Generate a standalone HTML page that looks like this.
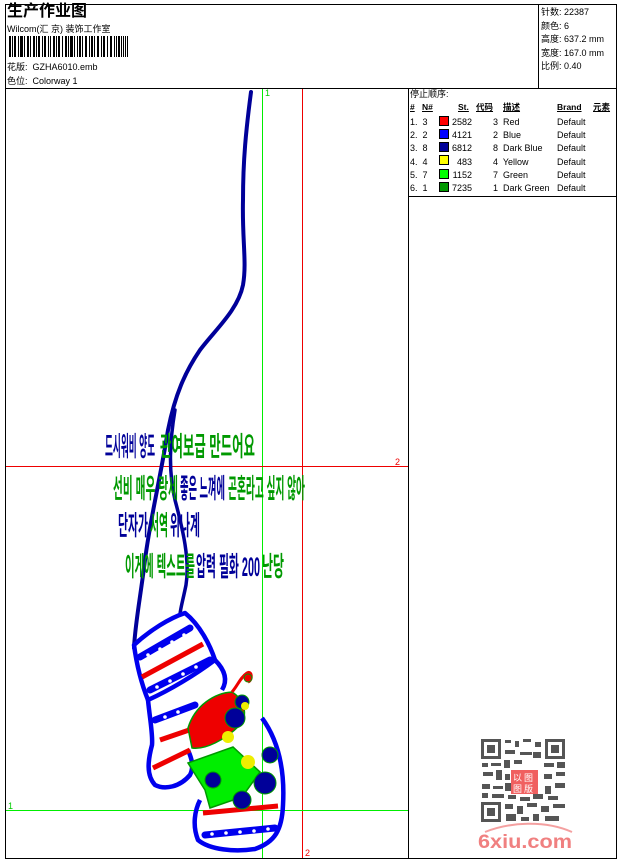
<!DOCTYPE html>
<html><head><meta charset="utf-8"><style>
body{margin:0;width:620px;height:860px;background:#fff;overflow:hidden;font-family:"Liberation Sans","Noto Sans CJK SC",sans-serif;}
.t{position:absolute;font-size:9px;color:#000;white-space:nowrap;line-height:10px}
</style></head><body>
<svg width="620" height="860" style="position:absolute;left:0;top:0" font-family="Liberation Sans, Noto Sans CJK SC, sans-serif">
<rect x="5.5" y="4.5" width="611" height="84" fill="none" stroke="#000"/>
<line x1="538.5" y1="4" x2="538.5" y2="88" stroke="#000"/>
<rect x="5.5" y="88.5" width="611" height="770" fill="none" stroke="#000"/>
<line x1="408.5" y1="88" x2="408.5" y2="858" stroke="#000"/>
<line x1="408" y1="196.5" x2="616" y2="196.5" stroke="#000"/>
<g fill="#000">
<rect x="9" y="36" width="2" height="21"/><rect x="12" y="36" width="1" height="21"/><rect x="14" y="36" width="2" height="21"/><rect x="18" y="36" width="1" height="21"/><rect x="20" y="36" width="3" height="21"/><rect x="24" y="36" width="1" height="21"/><rect x="27" y="36" width="2" height="21"/><rect x="30" y="36" width="1" height="21"/><rect x="33" y="36" width="2" height="21"/><rect x="36" y="36" width="1" height="21"/><rect x="38" y="36" width="2" height="21"/><rect x="42" y="36" width="1" height="21"/><rect x="44" y="36" width="2" height="21"/><rect x="48" y="36" width="1" height="21"/><rect x="50" y="36" width="1" height="21"/><rect x="53" y="36" width="2" height="21"/><rect x="56" y="36" width="1" height="21"/><rect x="58" y="36" width="2" height="21"/><rect x="62" y="36" width="1" height="21"/><rect x="65" y="36" width="2" height="21"/><rect x="68" y="36" width="1" height="21"/><rect x="70" y="36" width="3" height="21"/><rect x="74" y="36" width="1" height="21"/><rect x="77" y="36" width="1" height="21"/><rect x="79" y="36" width="2" height="21"/><rect x="82" y="36" width="1" height="21"/><rect x="85" y="36" width="2" height="21"/><rect x="89" y="36" width="1" height="21"/><rect x="91" y="36" width="2" height="21"/><rect x="94" y="36" width="1" height="21"/><rect x="97" y="36" width="2" height="21"/><rect x="101" y="36" width="1" height="21"/><rect x="103" y="36" width="2" height="21"/><rect x="107" y="36" width="1" height="21"/><rect x="110" y="36" width="2" height="21"/><rect x="114" y="36" width="1" height="21"/><rect x="116" y="36" width="1" height="21"/><rect x="118" y="36" width="2" height="21"/><rect x="121" y="36" width="1" height="21"/><rect x="123" y="36" width="1" height="21"/><rect x="125" y="36" width="1" height="21"/><rect x="127" y="36" width="1" height="21"/>
</g>
<line x1="262.5" y1="89" x2="262.5" y2="858" stroke="#00ee00"/>
<line x1="302.5" y1="89" x2="302.5" y2="858" stroke="#ee0000"/>
<line x1="6" y1="466.5" x2="408" y2="466.5" stroke="#ee0000"/>
<line x1="6" y1="810.5" x2="408" y2="810.5" stroke="#00ee00"/>
<text x="265" y="96" font-size="9" fill="#00cc00">1</text>
<text x="395" y="465" font-size="9" fill="#ee0000">2</text>
<text x="8" y="809" font-size="9" fill="#00cc00">1</text>
<text x="305" y="856" font-size="9" fill="#ee0000">2</text>
<g fill="none" stroke="#000099" stroke-width="4" stroke-linecap="round">
<path d="M251 92 C246 130 243 160 243 200 C242 240 247 262 243 285 C238 310 215 330 200 350 C185 372 175 395 168 430 C160 480 150 520 145 560 C140 600 135 625 134 648"/>
<path d="M175 410 C170 440 168 470 175 500 C183 530 190 560 186 585 C183 600 180 610 180 615" stroke-width="3.5"/>
</g>
<g font-weight="bold" font-family="Liberation Sans, Noto Sans CJK KR, sans-serif" font-size="27">
<text x="105" y="456" fill="#000099" textLength="50" lengthAdjust="spacingAndGlyphs">드시워비 양도</text>
<text x="160" y="456" fill="#009900" textLength="95" lengthAdjust="spacingAndGlyphs">관여보급 만드어요</text>
<text x="113" y="498" fill="#009900" textLength="65" lengthAdjust="spacingAndGlyphs">선비 매우 랑세</text>
<text x="180" y="498" fill="#000099" textLength="45" lengthAdjust="spacingAndGlyphs">좋은 느껴에</text>
<text x="228" y="498" fill="#009900" textLength="77" lengthAdjust="spacingAndGlyphs">곤혼라고 싶지 않아</text>
<text x="118" y="535" fill="#000099" textLength="30" lengthAdjust="spacingAndGlyphs">단자가</text>
<text x="150" y="535" fill="#009900" textLength="18" lengthAdjust="spacingAndGlyphs">서역</text>
<text x="170" y="535" fill="#000099" textLength="30" lengthAdjust="spacingAndGlyphs">위나계</text>
<text x="125" y="576" fill="#009900" textLength="70" lengthAdjust="spacingAndGlyphs">이게에 텍스트를</text>
<text x="196" y="576" fill="#000099" textLength="64" lengthAdjust="spacingAndGlyphs">압력 필화 200</text>
<text x="262" y="576" fill="#009900" textLength="22" lengthAdjust="spacingAndGlyphs">난당</text>
</g>
<!-- stocking -->
<g stroke="#0000ee" stroke-width="7" fill="none" stroke-linecap="round">
<path d="M140 657 L190 628"/>
<path d="M150 690 L210 660"/>
<path d="M155 720 L195 705"/>
<path d="M205 835 L275 828"/>
</g>
<g stroke="#0000ee" stroke-width="4.5" fill="none" stroke-linejoin="round">
<path d="M134 645 C150 630 170 618 185 613 C200 625 210 645 215 660 C195 675 170 690 148 700 C140 680 136 660 134 645 Z"/>
<path d="M148 700 C150 720 153 735 152 745 C148 760 146 775 155 785 C165 790 180 787 190 775 C195 765 190 755 188 750"/>
<path d="M215 660 C225 670 228 680 222 690"/>
<path d="M262 718 C278 740 285 770 283 805 C282 830 275 842 255 849 C235 852 210 850 198 840 C192 825 195 810 200 800"/>
</g>
<g stroke="#ee0000" stroke-width="5" fill="none">
<path d="M142 677 L203 644"/>
<path d="M153 768 L190 750"/>
<path d="M160 740 L195 728"/>
<path d="M203 813 L278 806"/>
</g>
<g fill="#fff">
<circle cx="148" cy="655" r="1.8"/><circle cx="160" cy="649" r="1.8"/><circle cx="172" cy="642" r="1.8"/><circle cx="184" cy="635" r="1.8"/>
<circle cx="157" cy="687" r="1.8"/><circle cx="170" cy="681" r="1.8"/><circle cx="183" cy="674" r="1.8"/><circle cx="196" cy="667" r="1.8"/>
<circle cx="165" cy="717" r="1.8"/><circle cx="178" cy="712" r="1.8"/>
<circle cx="212" cy="834" r="1.8"/><circle cx="226" cy="833" r="1.8"/><circle cx="240" cy="832" r="1.8"/><circle cx="254" cy="831" r="1.8"/><circle cx="268" cy="829" r="1.8"/>
</g>
<path d="M188 728 C195 705 215 693 232 692 C245 700 248 715 240 725 C225 740 205 750 192 748 Z" fill="#ee0000" stroke="#009900" stroke-width="1.5"/>
<path d="M232 692 C238 685 240 678 247 673 C252 670 253 680 248 682" fill="none" stroke="#ee0000" stroke-width="3"/>
<circle cx="248" cy="678" r="4" fill="#ee0000" stroke="#009900"/>
<path d="M188 763 L233 747 L260 772 L242 797 L210 808 L205 790 Z" fill="#00ee00" stroke="#009900" stroke-width="1.5"/>
<g fill="#000099" stroke="#009900" stroke-width="1">
<circle cx="235" cy="718" r="10"/><circle cx="242" cy="702" r="7"/><circle cx="270" cy="755" r="8"/><circle cx="265" cy="783" r="11"/><circle cx="213" cy="780" r="8"/><circle cx="242" cy="800" r="9"/>
</g>
<g fill="#eeee00">
<circle cx="228" cy="737" r="6"/><circle cx="248" cy="762" r="7"/><circle cx="245" cy="706" r="4"/>
</g>
<!-- QR -->
<g fill="#555">
<rect x="481" y="739" width="20" height="20"/><rect x="545" y="739" width="20" height="20"/><rect x="481" y="802" width="20" height="20"/>
</g>
<g fill="#fff"><rect x="484" y="742" width="14" height="14"/><rect x="548" y="742" width="14" height="14"/><rect x="484" y="805" width="14" height="14"/></g>
<g fill="#555"><rect x="487" y="745" width="8" height="8"/><rect x="551" y="745" width="8" height="8"/><rect x="487" y="808" width="8" height="8"/>
<rect x="505" y="740" width="6" height="3"/><rect x="515" y="741" width="4" height="6"/><rect x="523" y="739" width="8" height="3"/><rect x="535" y="742" width="6" height="5"/><rect x="505" y="750" width="10" height="4"/><rect x="520" y="752" width="12" height="3"/><rect x="533" y="752" width="8" height="6"/>
<rect x="482" y="763" width="6" height="4"/><rect x="491" y="763" width="10" height="3"/><rect x="504" y="760" width="6" height="8"/><rect x="514" y="760" width="8" height="4"/><rect x="544" y="763" width="10" height="4"/><rect x="557" y="762" width="8" height="6"/>
<rect x="483" y="772" width="10" height="4"/><rect x="496" y="770" width="6" height="10"/><rect x="505" y="774" width="5" height="6"/><rect x="544" y="774" width="8" height="5"/><rect x="556" y="772" width="9" height="4"/>
<rect x="482" y="784" width="8" height="5"/><rect x="493" y="786" width="10" height="3"/><rect x="505" y="783" width="6" height="8"/><rect x="545" y="786" width="6" height="8"/><rect x="555" y="783" width="10" height="5"/>
<rect x="482" y="793" width="6" height="5"/><rect x="492" y="794" width="12" height="4"/><rect x="508" y="795" width="8" height="4"/><rect x="520" y="797" width="10" height="4"/><rect x="533" y="794" width="10" height="5"/><rect x="548" y="796" width="10" height="4"/>
<rect x="505" y="804" width="8" height="5"/><rect x="517" y="806" width="6" height="8"/><rect x="527" y="803" width="10" height="4"/><rect x="541" y="806" width="8" height="6"/><rect x="553" y="804" width="12" height="4"/>
<rect x="506" y="814" width="10" height="7"/><rect x="521" y="817" width="8" height="4"/><rect x="533" y="814" width="6" height="7"/><rect x="545" y="816" width="14" height="5"/>
</g>
<rect x="511" y="770" width="27" height="24" fill="#f06060"/>
<g fill="#fff" font-size="9"><text x="513" y="781">以</text><text x="524" y="781">图</text><text x="513" y="792">图</text><text x="524" y="792">版</text></g>
<path d="M485 832 C510 822 545 820 572 832" fill="none" stroke="#f4a0a0" stroke-width="2"/>
<text x="478" y="848" font-size="19" font-weight="bold" fill="#f08080" textLength="94" lengthAdjust="spacingAndGlyphs">6xiu.com</text>
<g stroke="#000" stroke-width="1">
<rect x="439.5" y="116.5" width="9" height="9" fill="#ff0000"/>
<rect x="439.5" y="129.5" width="9" height="9" fill="#0000ff"/>
<rect x="439.5" y="142.5" width="9" height="9" fill="#000099"/>
<rect x="439.5" y="155.5" width="9" height="9" fill="#ffff00"/>
<rect x="439.5" y="169.5" width="9" height="9" fill="#00ff00"/>
<rect x="439.5" y="182.5" width="9" height="9" fill="#009900"/>
</g>
</svg>
<div class="t" style="left:7px;top:3px;font-size:16px;line-height:18px;font-weight:bold">生产作业图</div>
<div class="t" style="left:7px;top:24px">Wilcom(汇 京) 装饰工作室</div>
<div class="t" style="left:7px;top:62px">花版:&nbsp; GZHA6010.emb</div>
<div class="t" style="left:7px;top:76px">色位:&nbsp; Colorway 1</div>
<div class="t" style="left:541px;top:6px;line-height:13.5px">针数: 22387<br>颜色: 6<br>高度: 637.2 mm<br>宽度: 167.0 mm<br>比例: 0.40</div>
<div class="t" style="left:410px;top:89px">停止顺序:</div>
<div class="t" style="left:410px;top:102px;font-weight:bold;font-size:8.5px"><u>#</u><span style="position:absolute;left:12px"><u>N#</u></span><span style="position:absolute;left:48px"><u>St.</u></span><span style="position:absolute;left:66px"><u>代码</u></span><span style="position:absolute;left:93px"><u>描述</u></span><span style="position:absolute;left:147px"><u>Brand</u></span><span style="position:absolute;left:183px"><u>元素</u></span></div>
<div style="position:absolute;left:410px;top:116px;font-size:9px;line-height:13.2px;width:200px">
<div style="position:relative;height:13.2px"><span>1.&nbsp; 3</span><span style="position:absolute;right:138px">2582</span><span style="position:absolute;left:83px">3&nbsp; Red</span><span style="position:absolute;left:147px">Default</span></div>
<div style="position:relative;height:13.2px"><span>2.&nbsp; 2</span><span style="position:absolute;right:138px">4121</span><span style="position:absolute;left:83px">2&nbsp; Blue</span><span style="position:absolute;left:147px">Default</span></div>
<div style="position:relative;height:13.2px"><span>3.&nbsp; 8</span><span style="position:absolute;right:138px">6812</span><span style="position:absolute;left:83px">8&nbsp; Dark Blue</span><span style="position:absolute;left:147px">Default</span></div>
<div style="position:relative;height:13.2px"><span>4.&nbsp; 4</span><span style="position:absolute;right:138px">483</span><span style="position:absolute;left:83px">4&nbsp; Yellow</span><span style="position:absolute;left:147px">Default</span></div>
<div style="position:relative;height:13.2px"><span>5.&nbsp; 7</span><span style="position:absolute;right:138px">1152</span><span style="position:absolute;left:83px">7&nbsp; Green</span><span style="position:absolute;left:147px">Default</span></div>
<div style="position:relative;height:13.2px"><span>6.&nbsp; 1</span><span style="position:absolute;right:138px">7235</span><span style="position:absolute;left:83px">1&nbsp; Dark Green</span><span style="position:absolute;left:147px">Default</span></div>
</div>
</body></html>
